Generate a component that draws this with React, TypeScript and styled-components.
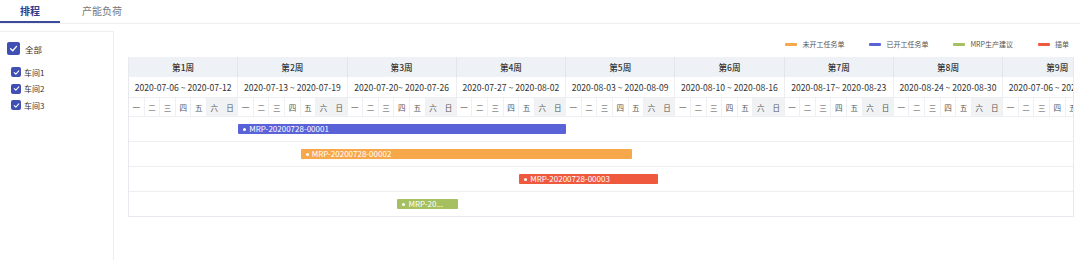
import React from "react";
import styled, { createGlobalStyle } from "styled-components";

const DAY = 15.61;
const WEEK_DAYS = ["一", "二", "三", "四", "五", "六", "日"];

const weeks = [
  { name: "第1周", range: "2020-07-06 ~ 2020-07-12" },
  { name: "第2周", range: "2020-07-13 ~ 2020-07-19" },
  { name: "第3周", range: "2020-07-20~ 2020-07-26" },
  { name: "第4周", range: "2020-07-27 ~ 2020-08-02" },
  { name: "第5周", range: "2020-08-03 ~ 2020-08-09" },
  { name: "第6周", range: "2020-08-10 ~ 2020-08-16" },
  { name: "第7周", range: "2020-08-17~ 2020-08-23" },
  { name: "第8周", range: "2020-08-24 ~ 2020-08-30" },
  { name: "第9周", range: "2020-07-06 ~ 2020-07-12" },
];

const COLORS = {
  pending: "#f6a84b",
  started: "#5a62d8",
  mrp: "#a5c060",
  urgent: "#ef5a3e",
};

const legend = [
  { label: "未开工任务单", color: COLORS.pending },
  { label: "已开工任务单", color: COLORS.started },
  { label: "MRP生产建议", color: COLORS.mrp },
  { label: "插单", color: COLORS.urgent },
];

// start = day index from the first Monday, span = number of days
const tasks = [
  { code: "MRP-20200728-00001", color: COLORS.started, start: 7, span: 21 },
  { code: "MRP-20200728-00002", color: COLORS.pending, start: 11, span: 21.2 },
  { code: "MRP-20200728-00003", color: COLORS.urgent, start: 25, span: 8.9 },
  { code: "MRP-20200728-00004", color: COLORS.mrp, start: 17.2, span: 4.05 },
];

// short bars only get the head of the code
const barLabel = (code: string, span: number) =>
  span < 6 ? `${code.slice(0, 6)}...` : code;

const workshops = ["车间1", "车间2", "车间3"];

const GlobalStyle = createGlobalStyle`
  body {
    margin: 0;
    background: #fff;
    font-family: "Noto Sans CJK SC", "Noto Sans", sans-serif;
    color: #333;
  }
`;

const Page = styled.div`
  width: 1080px;
  height: 260px;
  overflow: hidden;
  display: flex;
  flex-direction: column;
`;

const TabBar = styled.div`
  display: flex;
  height: 23px;
  border-bottom: 1px solid #eceef2;
`;

const Tab = styled.div<{ $active?: boolean }>`
  padding: 0 20px;
  margin-right: 2px;
  font-size: 10px;
  line-height: 21px;
  color: ${({ $active }) => ($active ? "#2e3c8d" : "#777")};
  font-weight: ${({ $active }) => ($active ? 700 : 400)};
  border-bottom: 2px solid ${({ $active }) => ($active ? "#3b4a9c" : "transparent")};
`;

const Body = styled.div`
  flex: 1;
  display: flex;
  padding-top: 7px;
`;

const SidePanel = styled.div`
  width: 114px;
  border-top: 1px solid #eceef2;
  border-right: 1px solid #eceef2;
  padding: 10px 0 0 7px;
  box-sizing: border-box;
  display: flex;
  flex-direction: column;
`;

const CheckRow = styled.label<{ $indent?: boolean }>`
  display: flex;
  align-items: center;
  gap: ${({ $indent }) => ($indent ? 3 : 5)}px;
  padding-left: ${({ $indent }) => ($indent ? 4 : 0)}px;
  height: ${({ $indent }) => ($indent ? 16.5 : 13)}px;
  margin-bottom: ${({ $indent }) => ($indent ? 0 : 9)}px;
  font-size: ${({ $indent }) => ($indent ? 8 : 8.5)}px;
  color: #333;
`;

const Box = styled.span<{ $size: number }>`
  width: ${({ $size }) => $size}px;
  height: ${({ $size }) => $size}px;
  border-radius: 2px;
  background: #3f4fb3;
  display: flex;
  align-items: center;
  justify-content: center;
`;

const Main = styled.div`
  flex: 1;
  padding: 0 5px 0 14px;
  display: flex;
  flex-direction: column;
`;

const Legend = styled.div`
  height: 26px;
  display: flex;
  align-items: center;
  justify-content: flex-end;
  gap: 25px;
  padding-right: 6px;
`;

const LegendItem = styled.div`
  display: flex;
  align-items: center;
  gap: 5px;
  font-size: 7px;
  color: #555;
`;

const LegendLine = styled.span<{ $color: string }>`
  width: 12px;
  height: 3px;
  border-radius: 1px;
  background: ${({ $color }) => $color};
`;

const Gantt = styled.div`
  width: 946px;
  border: 1px solid #e6e9ee;
  border-top: none;
  box-sizing: border-box;
  overflow: hidden;
`;

const Track = styled.div`
  width: ${DAY * 63}px;
`;

const WeekRow = styled.div`
  display: grid;
  grid-template-columns: repeat(9, ${DAY * 7}px);
  height: 20px;
  background: #eef1f5;
`;

const WeekCell = styled.div`
  display: flex;
  align-items: center;
  justify-content: center;
  font-size: 8.6px;
  font-weight: 500;
  color: #333;
  border-right: 1px solid #e2e6ec;
`;

const RangeRow = styled(WeekRow)`
  background: #fff;
`;

const RangeCell = styled(WeekCell)`
  font-weight: 400;
  font-size: 8.6px;
  white-space: nowrap;
  overflow: hidden;
  border-right-color: #eceef2;
`;

const DayGrid = styled.div<{ $height: number }>`
  display: grid;
  grid-template-columns: repeat(63, ${DAY}px);
  height: ${({ $height }) => $height}px;
  box-sizing: border-box;
  border-top: 1px solid #eceef2;
  align-items: center;
`;

const DayCell = styled.div<{ $weekend: boolean }>`
  height: 100%;
  display: flex;
  align-items: center;
  justify-content: center;
  font-size: 7.5px;
  color: #555;
  background: ${({ $weekend }) => ($weekend ? "#f1f2f4" : "#fff")};
  border-right: 1px solid #eef0f3;
  box-sizing: border-box;
`;

const Bar = styled.div<{ $color: string }>`
  height: 10px;
  background: ${({ $color }) => $color};
  border-radius: 1px;
  color: #fff;
  font-size: 8px;
  line-height: 10px;
  padding-left: 5px;
  white-space: nowrap;
  overflow: hidden;
  text-overflow: ellipsis;
  box-sizing: border-box;
`;

const Dot = styled.span`
  display: inline-block;
  width: 3px;
  height: 3px;
  border-radius: 50%;
  background: #fff;
  margin-right: 3px;
  vertical-align: 1.5px;
`;

const Check = ({ size }: { size: number }) => (
  <Box $size={size}>
    <svg width={size * 0.7} height={size * 0.7} viewBox="0 0 10 10">
      <path d="M1.8 5.2 L4.1 7.4 L8.3 2.6" fill="none" stroke="#fff" strokeWidth="1.5" strokeLinecap="round" strokeLinejoin="round" />
    </svg>
  </Box>
);

export default function App() {
  return (
    <Page>
      <GlobalStyle />
      <TabBar>
        <Tab $active>排程</Tab>
        <Tab>产能负荷</Tab>
      </TabBar>
      <Body>
        <SidePanel>
          <CheckRow>
            <Check size={13} />
            全部
          </CheckRow>
          {workshops.map((w) => (
            <CheckRow key={w} $indent>
              <Check size={10} />
              {w}
            </CheckRow>
          ))}
        </SidePanel>
        <Main>
          <Legend>
            {legend.map((l) => (
              <LegendItem key={l.label}>
                <LegendLine $color={l.color} />
                {l.label}
              </LegendItem>
            ))}
          </Legend>
          <Gantt>
            <Track>
              <WeekRow>
                {weeks.map((w) => (
                  <WeekCell key={w.name}>{w.name}</WeekCell>
                ))}
              </WeekRow>
              <RangeRow>
                {weeks.map((w) => (
                  <RangeCell key={w.name}>{w.range}</RangeCell>
                ))}
              </RangeRow>
              <DayGrid $height={19}>
                {weeks.flatMap((w) =>
                  WEEK_DAYS.map((d, i) => (
                    <DayCell key={w.name + d} $weekend={i >= 5}>
                      {d}
                    </DayCell>
                  ))
                )}
              </DayGrid>
              {tasks.map((t) => (
                <DayGrid key={t.code} $height={25}>
                  <Bar
                    $color={t.color}
                    style={{
                      gridColumn: `${Math.floor(t.start) + 1} / span ${Math.ceil(t.span)}`,
                      marginLeft: (t.start % 1) * DAY,
                      width: t.span * DAY - (t.start % 1) * DAY,
                    }}
                  >
                    <Dot />
                    {barLabel(t.code, t.span)}
                  </Bar>
                </DayGrid>
              ))}
            </Track>
          </Gantt>
        </Main>
      </Body>
    </Page>
  );
}
